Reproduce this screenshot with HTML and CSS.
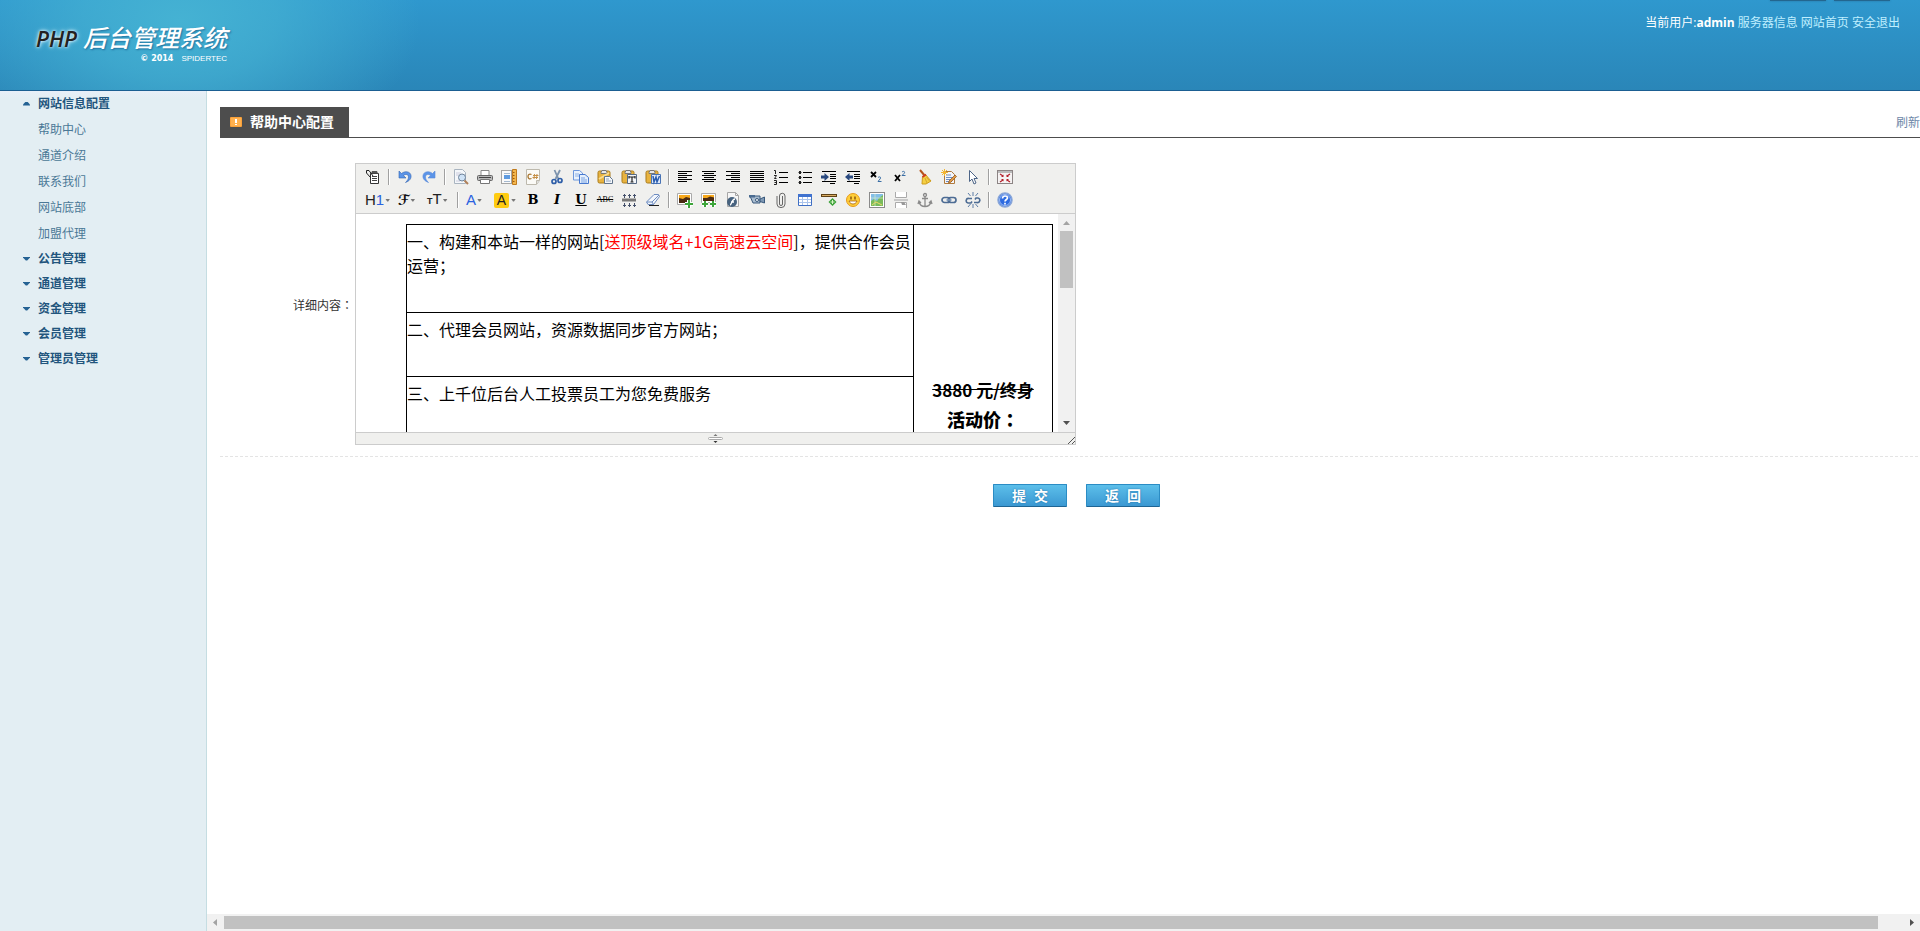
FILE: index.html
```html
<!DOCTYPE html>
<html lang="zh-CN">
<head>
<meta charset="utf-8">
<title>PHP 后台管理系统</title>
<link rel="stylesheet" href="styles.css">
</head>
<body>
<header class="header">
  <div class="logo">
    <div class="logo-title"><span class="logo-php">PHP</span><span class="logo-name">后台管理系统</span></div>
    <div class="logo-sub"><span class="logo-year">© 2014</span><span class="logo-corp">SPIDERTEC</span></div>
  </div>
  <div class="tab-shadows"><i></i><i></i></div>
  <nav class="user-nav">当前用户:<b>admin</b> <a href="#">服务器信息</a> <a href="#">网站首页</a> <a href="#">安全退出</a></nav>
</header>
<div class="body">
  <aside class="sidebar">
    <ul class="menu">
      <li class="group open"><a href="#">网站信息配置</a></li>
      <li class="item"><a href="#">帮助中心</a></li>
      <li class="item"><a href="#">通道介绍</a></li>
      <li class="item"><a href="#">联系我们</a></li>
      <li class="item"><a href="#">网站底部</a></li>
      <li class="item"><a href="#">加盟代理</a></li>
      <li class="group"><a href="#">公告管理</a></li>
      <li class="group"><a href="#">通道管理</a></li>
      <li class="group"><a href="#">资金管理</a></li>
      <li class="group"><a href="#">会员管理</a></li>
      <li class="group"><a href="#">管理员管理</a></li>
    </ul>
  </aside>
  <main class="main">
    <div class="page">
      <div class="content">
        <div class="title-bar">
          <h1 class="title"><svg width="12" height="10"><rect width="12" height="10" rx="1" fill="#f9a13a"/><rect x="1" y="1" width="10" height="8" fill="#ffb04d"/><path d="M5 2h2v4H5zM5 7h2v1H5z" fill="#fff"/></svg>帮助中心配置</h1>
          <a class="refresh" href="#">刷新</a>
        </div>
        <form class="form">
          <div class="row">
            <span class="label" id="detail-label">详细内容<span class="colon" lang="zh-TW">：</span></span>
            <div class="editor" role="group" aria-labelledby="detail-label">
              <div class="toolbar">
                <div class="tools">
                  <button type="button" title="HTML代码"><svg width="16" height="16"><path d="M5.500 4.500h8v10h-8z" fill="#fff" stroke="#333"/><path d="M7 2h5l1 2.500H6z" fill="#555"/><path d="M7 7.500h5M7 9.500h5M7 11.500h5" stroke="#444"/><path d="M1.500 1.500H4l4 5.500M1.500 1.500v2.500l4 4.500" fill="none" stroke="#222"/></svg></button>
                  <i class="sep"></i>
                  <button type="button" title="后退"><svg width="16" height="16"><path d="M2 2v7h7L6.500 6.500C9 4.500 11.500 5.500 11.500 8c0 2-1 3.500-3 5.500 4-1.500 6-4 5.500-7C13.500 2.500 8 1.500 4.500 4.500z" fill="#5b94e8" stroke="#3465b0" stroke-width=".6"/></svg></button>
                  <button type="button" title="前进"><svg width="16" height="16"><path d="M14 2v7H7l2.500-2.500C7 4.500 4.500 5.500 4.500 8c0 2 1 3.500 3 5.500C3.500 12 1.500 9.500 2 6.500 2.500 2.500 8 1.500 11.500 4.500z" fill="#5b94e8" stroke="#5b8cd8" stroke-width=".6"/></svg></button>
                  <i class="sep"></i>
                  <button type="button" title="预览"><svg width="16" height="16"><path d="M1.500.5h8l3 3v11h-11z" fill="#f4f7fa" stroke="#a9b4c0"/><path d="M3 4h5M3 6h3M3 12h4" stroke="#ccd"/><circle cx="9" cy="8.500" r="3.500" fill="#cfe3f7" stroke="#6f8399"/><path d="M11.500 11.500l3.500 3.500" stroke="#b0815a" stroke-width="2"/></svg></button>
                  <button type="button" title="打印"><svg width="16" height="16"><path d="M4 1.500h8v5H4z" fill="#fff" stroke="#888"/><rect x=".5" y="6.500" width="15" height="5" rx="1" fill="#b8b8b8" stroke="#666"/><path d="M2 8.500h12" stroke="#444"/><path d="M3.500 10.500h9v4h-9z" fill="#fff" stroke="#777"/></svg></button>
                  <button type="button" title="模板"><svg width="16" height="16"><path d="M.5 1.500h10v13H.5z" fill="#fafafa" stroke="#555" stroke-dasharray="1 1"/><path d="M3 6h6v4H3z" fill="#5f9be0"/><path d="M3 4.500h6M3 12.500h6" stroke="#a5b9cf"/><path d="M11.500.5h4v15h-4z" fill="#f3b64c" stroke="#c07a1c"/><path d="M12 3.500h1.500M12 6.500h1.500M12 9.500h1.500M12 12.500h1.500" stroke="#9c5b11"/></svg></button>
                  <button type="button" title="插入程序代码"><svg width="16" height="16"><path d="M1.500.5h13v11l-3 4h-10z" fill="#fbfaf6" stroke="#bdb9ad"/><path d="M11.500 15v-3.500h3" fill="#ddd" stroke="#bdb9ad"/><path d="M6.500 5.500C4 4.500 3 6 3 7.500s1 3 3.500 2" fill="none" stroke="#a8752e" stroke-width="1.300"/><path d="M9.500 5l-.5 5M12 5l-.5 5M8 6.500h5.500M7.500 8.500H13" stroke="#c69046"/></svg></button>
                  <button type="button" title="剪切"><svg width="16" height="16"><path d="M5.500 1l4 9M11 1L6.500 10" stroke="#7c93ad" stroke-width="1.800"/><circle cx="5" cy="12.500" r="2" fill="none" stroke="#2f5fa8" stroke-width="1.700"/><circle cx="11" cy="11.500" r="2" fill="none" stroke="#2f5fa8" stroke-width="1.700"/></svg></button>
                  <button type="button" title="复制"><svg width="16" height="16"><path d="M.5 1.500h6l3 2.500v7h-9z" fill="#e9f2fd" stroke="#6d97dc"/><path d="M2 5h4M2 7h4" stroke="#8fb2e6"/><path d="M6.500 5.500h5.500l3.500 3v6h-9z" fill="#e4effc" stroke="#4779cf"/><path d="M8 9h4M8 11h6M8 13h6" stroke="#7aa3e3"/></svg></button>
                  <button type="button" title="粘贴"><svg width="16" height="16"><rect x="1" y="2" width="12" height="12" rx="1.500" fill="#e8b33f" stroke="#a87b1d"/><path d="M4 3.500l1-2h4l1 2v1H4z" fill="#e8e8e8" stroke="#777"/><path d="M2 10l10-6" stroke="#f9dc90" stroke-width="2"/><path d="M7.500 7.500h5l3 3v4h-8z" fill="#f4f7fb" stroke="#61758c"/><path d="M9 10h3M9 12h5" stroke="#8fa4bd"/></svg></button>
                  <button type="button" title="粘贴为无格式文本"><svg width="16" height="16"><rect x="1" y="2" width="12" height="12" rx="1.500" fill="#e8b33f" stroke="#a87b1d"/><path d="M4 3.500l1-2h4l1 2v1H4z" fill="#e8e8e8" stroke="#777"/><path d="M6.500 5.500h9v9h-9z" fill="#f3f6fa" stroke="#586c85"/><path d="M8 8h6M11 8v5M9.500 13h3M8 7v2.500M14 7v2.500" stroke="#222" stroke-width="1.200"/></svg></button>
                  <button type="button" title="从Word粘贴"><svg width="16" height="16"><rect x="1" y="2" width="12" height="12" rx="1.500" fill="#e8b33f" stroke="#a87b1d"/><path d="M4 3.500l1-2h4l1 2v1H4z" fill="#e8e8e8" stroke="#777"/><path d="M6.500 5.500h9v9h-9z" fill="#dfeafa" stroke="#4a74b5"/><path d="M8 7l1 6 2-5 1 5 2.500-6" fill="none" stroke="#2a5db0" stroke-width="1.500"/></svg></button>
                  <i class="sep"></i>
                  <button type="button" title="左对齐"><svg width="16" height="16"><path d="M1 2.500h14M1 4.500h9M1 6.500h14M1 8.500h9M1 10.500h14M1 12.500h9" stroke="#000"/></svg></button>
                  <button type="button" title="居中"><svg width="16" height="16"><path d="M1 2.500h14M3 4.500h10M1 6.500h14M3 8.500h10M1 10.500h14M3 12.500h10" stroke="#000"/></svg></button>
                  <button type="button" title="右对齐"><svg width="16" height="16"><path d="M1 2.500h14M6 4.500h9M1 6.500h14M6 8.500h9M1 10.500h14M6 12.500h9" stroke="#000"/></svg></button>
                  <button type="button" title="两端对齐"><svg width="16" height="16"><path d="M1 2.500h14M1 4.500h14M1 6.500h14M1 8.500h14M1 10.500h14M1 12.500h14" stroke="#000"/></svg></button>
                  <button type="button" title="编号"><svg width="16" height="16"><path d="M6 3.500h9M6 8.500h9M6 13.500h9" stroke="#000"/><path d="M1 1.500h1.500V5M1 6.500h2.500L1.500 9.500h2M1 11.500h2.500v4H1M1.500 13.500h2" fill="none" stroke="#222"/></svg></button>
                  <button type="button" title="项目符号"><svg width="16" height="16"><path d="M6 3.500h9M6 8.500h9M6 13.500h9" stroke="#000"/><path d="M2 2h2v3H2zM1.500 3h3v1h-3zM2 7h2v3H2zM1.500 8h3v1h-3zM2 12h2v3H2zM1.500 13h3v1h-3z" fill="#222"/></svg></button>
                  <button type="button" title="增加缩进"><svg width="16" height="16"><path d="M1 2.500h14M9 5.500h6M9 7.500h6M9 9.500h6M1 12.500h14M9 14.500h5" stroke="#000"/><path d="M0 6.500h3.500V4L8 8l-4.500 4V9.500H0z" fill="#2a4a80"/></svg></button>
                  <button type="button" title="减少缩进"><svg width="16" height="16"><path d="M2 2.500h13M9 5.500h6M9 7.500h6M9 9.500h6M2 12.500h13M9 14.500h5" stroke="#000"/><path d="M8 6.500H4.500V4L0 8l4.500 4V9.500H8z" fill="#2a4a80"/></svg></button>
                  <button type="button" title="下标"><svg width="16" height="16"><path d="M2 3l5 5M7 3L2 8" stroke="#000" stroke-width="1.800"/><path d="M9 8.500c2-1.500 3.500 0 2 1.500L9 12.500h3.500" fill="none" stroke="#3a6ea5"/></svg></button>
                  <button type="button" title="上标"><svg width="16" height="16"><path d="M2 6l5 6M7 6l-5 6" stroke="#000" stroke-width="1.800"/><path d="M9 3c2-1.500 3.500 0 2 1.500L9 6.500h3.500" fill="none" stroke="#3a6ea5"/></svg></button>
                  <button type="button" title="清理HTML代码"><svg width="16" height="16"><path d="M3 1l5 6" stroke="#b5541c" stroke-width="2"/><path d="M5.500 7.500l3-2L14 12l-5 3-4 0z" fill="#f4cf43" stroke="#cf9d1d"/><path d="M5.500 8l3.500-2.500" stroke="#cf3b24" stroke-width="2"/><path d="M8 9l2 5M9.500 8l3 4" stroke="#d5a82a"/></svg></button>
                  <button type="button" title="一键排版"><svg width="16" height="16"><path d="M3.500 2.500h7l3 3v9h-10z" fill="#f3f5fb" stroke="#b07a3c"/><path d="M5 6h5M5 8.500h7M5 10.500h7M5 12.500h6" stroke="#6d8fc5"/><path d="M3.500 0v7M0 3.500h7M1 1l5 5M6 1L1 6" stroke="#f2b533"/><path d="M15.500 7.500l-6 6-2 .5.500-2 6-6z" fill="#e39b45" stroke="#8a5118" stroke-width=".7"/></svg></button>
                  <button type="button" title="全选"><svg width="16" height="16"><path d="M4.500 1.500v11L7 10l2 5 2-1-2-4.500h3.500z" fill="#fff" stroke="#4d6587"/></svg></button>
                  <i class="sep"></i>
                  <button type="button" title="全屏显示"><svg width="16" height="16"><rect x=".5" y="1.500" width="15" height="13" fill="#f5f3f3" stroke="#8c8484"/><path d="M1 3h14" stroke="#bbb" stroke-width="2"/><path d="M3 5l3 2M13 5l-3 2M3 13l3-2M13 13l-3-2" stroke="#b3202a" stroke-width="1.300"/><path d="M6.500 5.500V8H4zM9.500 5.500V8H12zM6.500 12.500V10H4zM9.500 12.500V10H12z" fill="#b3202a"/></svg></button>
                </div>
                <div class="tools">
                  <button type="button" title="段落" class="drop w25"><span class="g-h">H<b>1</b></span></button>
                  <button type="button" title="字体" class="drop w21"><span class="g-f">ℱ</span></button>
                  <button type="button" title="文字大小" class="drop w23"><span class="g-t"><small>T</small>T</span></button>
                  <i class="sep"></i>
                  <button type="button" title="文字颜色" class="drop w20"><span class="g-a">A</span></button>
                  <button type="button" title="文字背景" class="drop w23"><span class="g-bg">A</span></button>
                  <button type="button" title="粗体" class="letter"><b>B</b></button>
                  <button type="button" title="斜体" class="letter"><em>I</em></button>
                  <button type="button" title="下划线" class="letter"><u>U</u></button>
                  <button type="button" title="删除线" class="letter"><s>ABC</s></button>
                  <button type="button" title="行距"><svg width="16" height="16"><path d="M1 8h14" stroke="#777" stroke-width="3"/><path d="M3.500 2v4M8.500 2v4M13.500 2v4M3.500 11v4M8.500 11v4M13.500 11v4M2 3.500h3M7 3.500h3M12 3.500h3M2 13.500h3M7 13.500h3M12 13.500h3" stroke="#44506b"/></svg></button>
                  <button type="button" title="删除格式"><svg width="16" height="16"><path d="M9 2.500h4.500l1 2-6 8H3l-1.500-2.500z" fill="#f2f6fc" stroke="#6d8cc0"/><path d="M2 10h5l7-7M7 10l1.500 2.500" fill="none" stroke="#6d8cc0"/><path d="M4 13.500h10" stroke="#222"/></svg></button>
                  <i class="sep"></i>
                  <button type="button" title="图片"><svg width="16" height="16"><path d="M.5 1.500h14v11H.5z" fill="#fff" stroke="#aaa"/><path d="M2 3h11v4H2z" fill="#f7a81b"/><path d="M2 6l4 1 3-2 4 1v5H2z" fill="#4a2a12"/><path d="M12 8v8M8 12h8" stroke="#fff" stroke-width="4"/><path d="M12 8v8M8 12h8" stroke="#3da53a" stroke-width="2"/></svg></button>
                  <button type="button" title="批量图片上传"><svg width="16" height="16"><path d="M.5 1.500h14v9H.5z" fill="#fff" stroke="#aaa"/><path d="M2 3h11v3H2z" fill="#f7a81b"/><path d="M2 6l4 0 3-1.500 4 1V9H2z" fill="#4a2a12"/><path d="M4 9v6M1 12h6M12 9v6M9 12h6" stroke="#fff" stroke-width="4"/><path d="M4 9v6M1 12h6M12 9v6M9 12h6" stroke="#3da53a" stroke-width="2"/></svg></button>
                  <button type="button" title="Flash"><svg width="16" height="16"><path d="M2.500.5h8l3 3v11h-11z" fill="#f6f6f6" stroke="#a6a6a6"/><path d="M10.500.5v3h3" fill="none" stroke="#a6a6a6"/><circle cx="7" cy="10" r="5" fill="#47637f"/><path d="M5 13c1.500 0 2-6 5-6M6 10h3" fill="none" stroke="#fff" stroke-width="1.400"/></svg></button>
                  <button type="button" title="视音频"><svg width="16" height="16"><path d="M1 4h10v7H4z" fill="#a9bccf" stroke="#39597c"/><path d="M0 3h6v2.500H0z" fill="#4a6b90"/><path d="M11 7l4.500-2v6L11 9.500z" fill="#7f99b5" stroke="#39597c"/><circle cx="8" cy="8" r="1.500" fill="#fff" stroke="#39597c"/></svg></button>
                  <button type="button" title="插入文件"><svg width="16" height="16"><path d="M9.500 4v8a1.500 1.500 0 0 1-3 0V4a2.500 2.500 0 0 1 5.500 0v8a3.900 3.500 0 0 1-8 0V4" fill="none" stroke="#666"/></svg></button>
                  <button type="button" title="表格"><svg width="16" height="16"><path d="M1.500 2.500h13v11h-13z" fill="#fff" stroke="#3f6fc4"/><path d="M1 3.500h14" stroke="#3f72cf" stroke-width="3"/><path d="M2 7.500h12M2 10.500h12M5.500 5v8M10.500 5v8" stroke="#a9c3ec"/></svg></button>
                  <button type="button" title="插入横线"><svg width="16" height="16"><rect x=".5" y="2.500" width="15" height="2" fill="#d8ab62" stroke="#5f4218"/><path d="M11.500 6l4 4-4 4-4-4z" fill="#39a136"/><path d="M11.500 8v4M9.500 10h4" stroke="#d8f3c6"/></svg></button>
                  <button type="button" title="插入表情"><svg width="16" height="16"><circle cx="8" cy="8" r="6.500" fill="#ffce38" stroke="#e69b1c"/><path d="M6 4.500v3M10 4.500v3" stroke="#7a4708" stroke-width="1.300"/><path d="M4 9c1.500 4 6.500 4 8 0z" fill="#fff" stroke="#a35d10" stroke-width=".8"/></svg></button>
                  <button type="button" title="Google地图"><svg width="16" height="16"><rect x=".5" y=".5" width="15" height="15" fill="#fff" stroke="#8a8a8a"/><path d="M2 2h12v12H2z" fill="#83bfe8"/><path d="M2 9l3-2 3 2 2-3 4-3v11H2z" fill="#79bb5b"/><path d="M6 2v12M2 6h12" stroke="#d6ecc9" stroke-width=".7"/><path d="M3 13l4-3 6 3" stroke="#f0d76a" fill="none"/></svg></button>
                  <button type="button" title="插入分页符"><svg width="16" height="16"><path d="M2.500 0v5.500h11V0M2.500 16v-5.500h11V16" fill="#fff" stroke="#aaa"/><path d="M1 8h14" stroke="#bbb" stroke-width="1.500"/><path d="M8 10l3 0 2 3-4 0z" fill="#999"/></svg></button>
                  <button type="button" title="锚点"><svg width="16" height="16"><circle cx="8" cy="3" r="1.500" fill="none" stroke="#8a8a8a" stroke-width="1.300"/><path d="M8 4.500V14M5 6.500h6M2 10c1 4 4 4.500 6 4.500s5-.5 6-4.500M1 12l1-3 2 2M15 12l-1-3-2 2" fill="none" stroke="#8a8a8a" stroke-width="1.300"/></svg></button>
                  <button type="button" title="超级链接"><svg width="16" height="16"><rect x="1" y="5.500" width="8" height="5" rx="2.500" fill="none" stroke="#4d6c94" stroke-width="1.700"/><rect x="7" y="5.500" width="8" height="5" rx="2.500" fill="none" stroke="#4d6c94" stroke-width="1.700"/><path d="M5 8h6" stroke="#8aa5c7"/></svg></button>
                  <button type="button" title="取消超级链接"><svg width="16" height="16"><path d="M7 6.500H4a2 2 0 0 0-1 4.500h3l1-1.500M9 10.500h3a2 2 0 0 0 1-4.500h-2L10 7.500" fill="none" stroke="#4d6c94" stroke-width="1.600"/><path d="M8 0v4M3 1l2.500 3M13 1l-2.500 3M8 12v4M3 15l2.500-3M13 15l-2.500-3" stroke="#5c7da6"/></svg></button>
                  <i class="sep"></i>
                  <button type="button" title="关于"><svg width="16" height="16"><circle cx="8" cy="8" r="7" fill="#2e6be0" stroke="#89a6d8" stroke-width="1.500"/><circle cx="8" cy="8" r="5.500" fill="none" stroke="#cfe0fb" stroke-width=".7"/><path d="M5.500 6.500C5.500 3 10.500 3.500 10.500 6c0 1.500-2.500 1.500-2.500 3.500M8 10.800v1.700" fill="none" stroke="#fff" stroke-width="1.700"/></svg></button>
                </div>
              </div>
              <div class="edit">
                <div class="doc">
                  <table class="doc-table">
                    <tbody>
                      <tr class="r1"><td>一、构建和本站一样的网站[<span class="red">送顶级域名+1G高速云空间</span>]，提供合作会员运营；</td><td class="price" rowspan="3"><del>3880 元/终身</del><strong>活动价<span class="colon" lang="zh-TW">：</span></strong></td></tr>
                      <tr class="r2"><td>二、代理会员网站，资源数据同步官方网站；</td></tr>
                      <tr class="r3"><td>三、上千位后台人工投票员工为您免费服务</td></tr>
                    </tbody>
                  </table>
                </div>
                <div class="vbar"><svg width="17" height="17"><path d="M5 11h7L8.500 7z" fill="#a3a3a3"/></svg><div class="vtrack"><div class="vthumb"></div></div><svg width="17" height="17"><path d="M5 6h7l-3.500 4z" fill="#505050"/></svg></div>
              </div>
              <div class="statusbar">
                <svg class="grip" width="15" height="11"><path d="M7.500 1l2 2h-4z" fill="#777"/><rect x=".5" y="4.500" width="14" height="2" rx="1" fill="#fff" stroke="#aaa"/><path d="M5.500 8h4l-2 2z" fill="#333"/></svg>
                <svg class="corner" width="8" height="8"><path d="M1 8l7-7M5 8l3-3" stroke="#555"/></svg>
              </div>
            </div>
          </div>
          <div class="actions"><button type="submit" class="btn">提&nbsp; 交</button><button type="button" class="btn">返&nbsp; 回</button></div>
        </form>
      </div>
    </div>
    <div class="hbar"><svg width="17" height="17"><path d="M10 5v7L6 8.500z" fill="#a3a3a3"/></svg><div class="htrack"><div class="hthumb"></div></div><svg width="17" height="17"><path d="M7 5v7l4-3.500z" fill="#505050"/></svg></div>
  </main>
</div>
</body>
</html>
```
FILE: styles.css
```css
* { box-sizing: border-box; }
body {
  margin: 0;
  height: 100vh;
  display: flex;
  flex-direction: column;
  overflow: hidden;
  background: #fff;
  color: #333;
  font: 12px/20px "Open Sans", "Noto Sans CJK SC", sans-serif;
}
a { text-decoration: none; color: inherit; }
button { font: inherit; color: inherit; cursor: pointer; }
svg { display: block; }
.colon { font-family: "Noto Sans CJK TC", sans-serif; }

/* header */
.header {
  position: relative;
  display: flex;
  justify-content: space-between;
  flex: none;
  height: 91px;
  padding: 0 20px 0 36px;
  border-bottom: 1px solid #1b5f92;
  background:
    radial-gradient(ellipse 240px 150px at 180px 20px, #45b2d3 0%, rgba(69, 178, 211, .7) 40%, rgba(69, 178, 211, 0) 100%),
    linear-gradient(#2f98ce, #2a86b8);
}
.logo { padding-top: 23px; color: #fff; }
.logo-title { display: flex; gap: 6px; font-style: italic; line-height: 30px; white-space: nowrap; }
.logo-php {
  font-size: 22px;
  font-weight: 600;
  color: #222;
  text-shadow: 0 0 3px #fff, 0 0 5px #bfeaf5;
}
.logo-name { font-size: 24px; font-weight: 500; text-shadow: 1px 1px 2px #1f6f9c; }
.logo-sub {
  display: flex;
  justify-content: flex-end;
  gap: 8px;
  line-height: 12px;
}
.logo-year { font-family: "DejaVu Sans", sans-serif; font-size: 8px; font-weight: bold; }
.logo-corp { font-family: "Liberation Sans", sans-serif; font-size: 8px; }
.tab-shadows { position: absolute; top: 0; right: 30px; display: flex; gap: 8px; }
.tab-shadows i { width: 56px; height: 1px; background: #23668f; box-shadow: 0 0 2px #23668f; }
.user-nav { padding-top: 13px; color: #fff; }
.user-nav a { color: #bfefff; }

/* side menu */
.body { flex: 1; display: flex; min-height: 0; }
.sidebar {
  flex: none;
  width: 207px;
  border-right: 1px solid #c5dde2;
  background: linear-gradient(#e8eff8, #e3eef3 8px);
}
.menu { margin: 0; padding: 0; list-style: none; }
.menu li { display: flex; align-items: center; height: 26px; padding-left: 38px; }
.menu .item { padding-top: 2px; color: #4a7896; }
.menu .group { height: 25px; padding-left: 23px; gap: 8px; color: #22557d; font-weight: bold; }
.group::before {
  content: "";
  width: 7px;
  height: 4px;
  background: #256293;
  clip-path: polygon(0 0, 100% 0, 100% 25%, 60% 100%, 40% 100%, 0 25%);
}
.group.open::before { clip-path: polygon(0 100%, 0 75%, 40% 0, 60% 0, 100% 75%, 100% 100%); }

/* main pane */
.main { flex: 1; min-width: 0; display: flex; flex-direction: column; }
.page { flex: 1; overflow: hidden; padding-left: 13px; }
.content { width: calc(100% + 13px); padding-top: 16px; }
.title-bar {
  display: flex;
  justify-content: space-between;
  align-items: center;
  height: 31px;
  border-bottom: 1px solid #4d4d4d;
}
.title {
  display: flex;
  align-items: center;
  gap: 8px;
  height: 31px;
  margin: 0;
  padding: 0 15px 0 10px;
  background: #4d4d4d;
  color: #fff;
  font-size: 14px;
}
.refresh { padding: 2px 13px 0 0; color: #6d87a8; }

.row {
  display: flex;
  align-items: center;
  padding: 25px 0 11px;
  border-bottom: 1px dashed #e4e4e4;
}
.label { width: 135px; padding: 2px 2px 0 0; text-align: right; }
.actions { display: flex; justify-content: center; gap: 19px; padding-top: 27px; }
.btn {
  width: 74px;
  height: 23px;
  padding: 0;
  border: 1px solid #2b8cc4;
  border-bottom-color: #1f6594;
  border-radius: 1px;
  background: linear-gradient(#5cbfea, #3b98d2);
  color: #fff;
  font: bold 14px/20px "Liberation Sans", "Noto Sans CJK SC", sans-serif;
  text-shadow: 0 0 2px #1d6ea6;
}

/* rich text editor */
.editor { width: 721px; border: 1px solid #ccc; }
.toolbar {
  display: grid;
  gap: 1px;
  padding: 2px 5px;
  border-bottom: 1px solid #ccc;
  background: #f0f0ee;
}
.tools { display: flex; }
.tools button {
  display: flex;
  justify-content: center;
  align-items: center;
  flex: none;
  width: 22px;
  height: 20px;
  margin: 1px;
  padding: 0;
  border: 1px solid transparent;
  background: none;
}
.sep { width: 2px; height: 16px; margin: 3px; border-left: 1px solid #a0a0a0; border-right: 1px solid #fff; }
.tools .drop {
  justify-content: flex-start;
  gap: 1px;
  padding: 0 2px;
  color: #222;
  font: 15px/16px "Liberation Sans", sans-serif;
}
.tools .w25 { width: 31px; }
.tools .w21 { width: 27px; }
.tools .w23 { width: 29px; }
.tools .w20 { width: 26px; }
.drop::after { content: ""; flex: none; width: 5px; height: 3px; background: #777; clip-path: polygon(0 0, 100% 0, 60% 100%, 40% 100%); }
.g-h b { color: #2a62e0; font-weight: normal; }
.g-f { color: #111; font: bold 14px/16px "DejaVu Sans", sans-serif; }
.g-t small { font-size: 9px; font-weight: bold; }
.g-a { color: #2a62e0; }
.g-bg { width: 15px; margin-right: 1px; border-radius: 2px; background: #ffcc11; text-align: center; font-size: 14px; line-height: 15px; }
.tools .letter { color: #000; font: bold 13px/16px "DejaVu Serif", serif; }
.letter s { font: 8px/16px "Liberation Serif", serif; }

.edit { display: flex; height: 218px; overflow: hidden; }
.doc {
  flex: 1;
  overflow: hidden;
  padding: 10px 5px 0 50px;
  color: #000;
  font: 16px/24px "Noto Sans CJK SC", sans-serif;
}
.doc-table { width: 647px; border-collapse: collapse; table-layout: fixed; }
.doc-table td { padding: 4px 0; border: 1px solid #000; vertical-align: top; }
.doc-table .price { width: 139px; padding-top: 149px; text-align: center; font-weight: bold; font-size: 17px; }
.price del, .price strong { display: block; line-height: 31px; }
.price strong { margin-top: 3px; font-size: 18px; line-height: 22px; }
.r1 { height: 88px; }
.r2 { height: 64px; }
.r3 { height: 88px; }
.red { color: #f00; }

.vbar { width: 17px; display: flex; flex-direction: column; background: #f1f1f1; }
.vtrack { flex: 1; padding: 0 2px; }
.vthumb { height: 31%; background: #c1c1c1; }
.statusbar {
  position: relative;
  display: flex;
  justify-content: center;
  height: 12px;
  border-top: 1px solid #ccc;
  background: #f0f0ee;
}
.corner { position: absolute; right: 0; bottom: 0; }

.hbar { display: flex; flex: none; height: 17px; background: #f1f1f1; }
.htrack { flex: 1; padding: 2px 0; }
.hthumb { width: 98.5%; height: 13px; background: #c1c1c1; }
```
